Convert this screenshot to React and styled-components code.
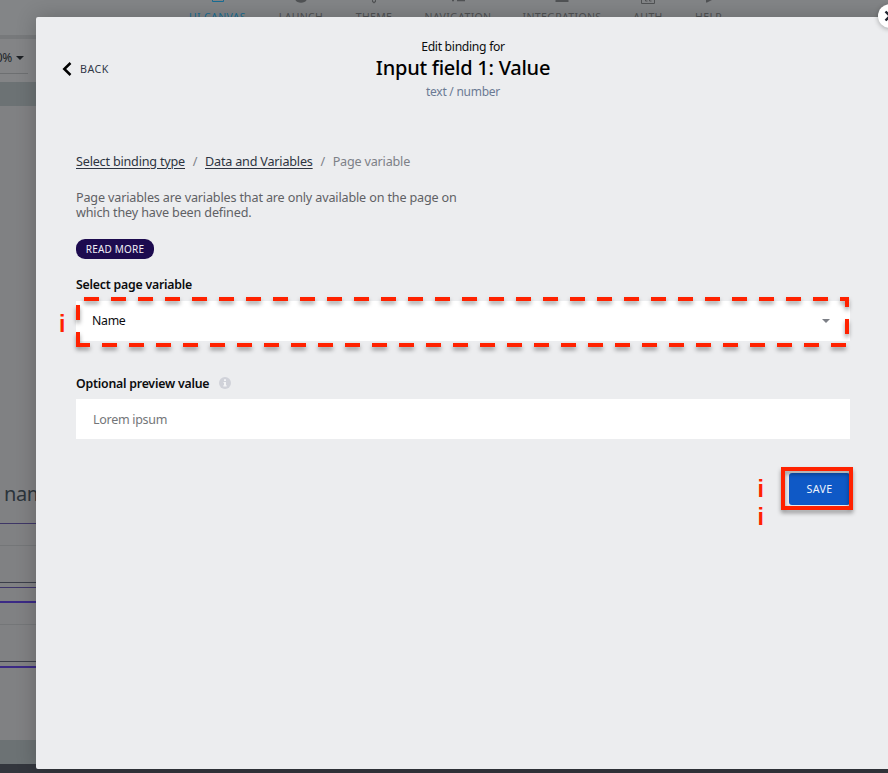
import React from "react";
import styled, { createGlobalStyle } from "styled-components";

const Global = createGlobalStyle`
  * { box-sizing: border-box; }
  body { margin: 0; overflow: hidden; font-family: "Noto Sans", "Open Sans", sans-serif; }
  button, input { font-family: inherit; }
`;

const Screen = styled.div`
  position: relative;
  width: 888px;
  height: 773px;
  overflow: hidden;
`;

/* Dimmed editor behind the dialog */
const Backdrop = styled.div`
  display: flex;
  flex-direction: column;
  height: 100%;
  background: #808183;
`;
const TopBar = styled.nav`
  display: flex;
  align-items: flex-start;
  height: 39px;
  padding-left: 189px;
  background: #838587;
  border-bottom: 4px solid #77797b;
  flex: none;
`;
const NavItem = styled.div`
  display: flex;
  flex-direction: column;
  align-items: center;
  flex: none;
  width: ${(p) => p.$width}px;
  margin-right: ${(p) => p.$gap}px;
  color: ${(p) => (p.$active ? "#176d94" : "#505254")};
  font-size: 10.5px;
  line-height: 15px;
  letter-spacing: 0.35px;
  white-space: nowrap;
  svg { display: block; height: 9px; width: 20px; margin-bottom: 1px; flex: none; }
`;
const Toolbar = styled.div`
  display: flex;
  align-items: flex-start;
  flex: none;
  height: 43px;
  width: 100%;
  background: #838486;
`;
const Zoom = styled.div`
  display: flex;
  align-items: center;
  justify-content: flex-end;
  gap: 4px;
  width: 28px;
  height: 35px;
  padding: 3px 4px 0 0;
  border-bottom: 1px solid #6d6f71;
  color: #202429;
  font-size: 12px;
  white-space: nowrap;
  letter-spacing: -0.3px;
  svg { flex: none; }
`;
const Band = styled.div`
  flex: none;
  height: 24px;
  background: #6c7274;
`;
const Canvas = styled.div`
  flex: none;
  display: flex;
  flex-direction: column;
  height: 634px;
`;
const FieldName = styled.div`
  height: 417px;
  padding: 371px 0 0 4px;
  color: #2c343b;
  font-size: 20px;
  line-height: 34px;
  letter-spacing: -0.4px;
`;
const Rule = styled.div`
  flex: none;
  height: ${(p) => p.$weight}px;
  margin-bottom: ${(p) => p.$after}px;
  background: ${(p) => p.$color};
`;
const Footer = styled.div`
  flex: 1;
  background: #33363d;
`;

/* Dialog */
const Dialog = styled.section`
  position: absolute;
  left: 36px;
  top: 17px;
  width: 854px;
  height: 752px;
  padding: 21px 40px 0;
  display: flex;
  flex-direction: column;
  background: #ecedef;
  border-radius: 2px;
  box-shadow: 0 0 20px rgba(0, 0, 0, 0.22);
`;
const Header = styled.header`
  display: grid;
  grid-template-columns: 1fr auto 1fr;
  height: 64px;
`;
const Back = styled.button`
  display: flex;
  align-items: center;
  align-self: start;
  gap: 8px;
  height: 20px;
  margin: 21px 0 0 -14px;
  padding: 0;
  border: 0;
  background: none;
  color: #323847;
  font-size: 10.7px;
  letter-spacing: 0.5px;
`;
const Heading = styled.div`
  display: flex;
  flex-direction: column;
  align-items: center;
  white-space: nowrap;
`;
const Overline = styled.div`
  color: #0c0d0e;
  font-size: 12.2px;
  line-height: 18px;
  letter-spacing: -0.31px;
`;
const Title = styled.h1`
  margin: 0;
  color: #000;
  font-size: 20px;
  font-weight: 500;
  line-height: 23px;
  letter-spacing: -0.25px;
`;
const Subtitle = styled.div`
  margin-top: 2px;
  color: #6b7a94;
  font-size: 12px;
  line-height: 22px;
  letter-spacing: -0.26px;
`;
const Crumbs = styled.nav`
  display: flex;
  align-items: center;
  height: 20px;
  margin-top: 49px;
  color: #7c8087;
  font-size: 12.6px;
  letter-spacing: -0.19px;
  white-space: nowrap;
`;
const CrumbLink = styled.a`
  color: #2d3441;
  text-decoration: underline;
  text-decoration-thickness: 1px;
  text-underline-offset: 2px;
`;
const Slash = styled.span`
  width: 20px;
  text-align: center;
`;
const Description = styled.p`
  width: 400px;
  margin: 19px 0 0;
  color: #5f6165;
  font-size: 12.6px;
  line-height: 15px;
  letter-spacing: -0.155px;
`;
const ReadMore = styled.button`
  flex: none;
  align-self: flex-start;
  width: 78px;
  height: 20px;
  margin-top: 19px;
  padding: 0;
  border: 0;
  border-radius: 9px;
  background: #1d0b4f;
  color: #f1eff6;
  font-size: 10px;
  line-height: 19px;
  letter-spacing: 0.2px;
`;
const Label = styled.label`
  display: flex;
  align-items: center;
  gap: 10px;
  height: 20px;
  margin-top: ${(p) => p.$top}px;
  color: #0b0c0e;
  font-size: 12.3px;
  font-weight: 600;
  letter-spacing: -0.21px;
`;
const SelectWrap = styled.div`
  position: relative;
  margin-top: 7px;
`;
const Select = styled.div`
  display: flex;
  align-items: center;
  justify-content: space-between;
  height: 40px;
  padding: 0 20px 0 16px;
  background: #fff;
  color: #0b0c0e;
  font-size: 12.3px;
  letter-spacing: -0.3px;
`;
const Value = styled.span`
  padding-bottom: 2px;
`;
const Input = styled.input`
  flex: none;
  height: 40px;
  margin-top: 6px;
  padding: 0 17px;
  border: 0;
  border-radius: 0;
  outline: 0;
  background: #fff;
  font-size: 12.5px;
  letter-spacing: -0.3px;
  &::placeholder { color: #737578; opacity: 1; }
`;
const Actions = styled.div`
  position: relative;
  display: flex;
  justify-content: flex-end;
  margin-top: 34px;
`;
const Save = styled.button`
  width: 61px;
  height: 32px;
  padding: 0;
  border: 0;
  border-radius: 3px;
  background: #0f59c6;
  color: #eef4fd;
  font-size: 10.7px;
  letter-spacing: 0.4px;
`;
const Close = styled.button`
  position: absolute;
  left: 842px;
  top: -13px;
  width: 24px;
  height: 24px;
  display: flex;
  align-items: center;
  justify-content: center;
  padding: 0;
  border: 0;
  border-radius: 50%;
  background: #fff;
  box-shadow: 0 1px 5px rgba(0, 0, 0, 0.3);
`;

/* Red annotations laid over the form */
const DashFrame = styled.svg`
  position: absolute;
  left: -4px;
  top: -8px;
  overflow: visible;
  filter: drop-shadow(0 3px 2px rgba(0, 0, 0, 0.38));
`;
const SaveFrame = styled.div`
  position: absolute;
  right: -3px;
  top: -6px;
  width: 72px;
  height: 43px;
  border: 4px solid #ff2200;
  filter: drop-shadow(0 3px 2px rgba(0, 0, 0, 0.38));
`;
const Marker = styled.span`
  position: absolute;
  left: ${(p) => p.$x}px;
  top: ${(p) => p.$y}px;
  color: #ff2200;
  font-family: "Liberation Sans", Arial, sans-serif;
  font-size: 23px;
  font-weight: 700;
  line-height: 28px;
`;

const NavGlyph = ({ kind }) => (
  <svg viewBox="0 0 20 9" fill="none" stroke="currentColor">
    {kind === "canvas" && <path d="M4.5-2V1.500h11V-2" />}
    {kind === "launch" && <path d="M4-1h12C15 4 5 4 4-1z" fill="currentColor" stroke="none" />}
    {kind === "theme" && <path d="M8.500-1v3q1.500 2 3 0V-1M10 1v2" />}
    {kind === "navigation" && <path d="M4 .5h2M9 .5h8" strokeWidth="1.300" />}
    {kind === "integrations" && <path d="M3.500-1h13v3h-13z" fill="currentColor" stroke="none" />}
    {kind === "auth" && <path d="M3.500-2v5.500h13V-2M7.500-1v2h2M11.500-1v2h2" />}
    {kind === "help" && <path d="M7 2.500V0h6L8 2.500z" fill="currentColor" stroke="none" />}
  </svg>
);

const NAV = [
  ["canvas", "UI CANVAS", 57, 33],
  ["launch", "LAUNCH", 44, 33],
  ["theme", "THEME", 36, 33],
  ["navigation", "NAVIGATION", 66, 31],
  ["integrations", "INTEGRATIONS", 80, 32],
  ["auth", "AUTH", 28, 33],
  ["help", "HELP", 27, 0],
];

const RULES = [
  [1, 21, "#3e3666"],
  [1, 36, "#747678"],
  [1, 4, "#3b3e49"],
  [1, 13, "#3e3569"],
  [2, 21, "#3b2a85"],
  [1, 36, "#747678"],
  [1, 4, "#3b3e49"],
  [2, 0, "#3b2a85"],
];

export default function App() {
  return (
    <Screen>
      <Global />
      <Backdrop>
        <TopBar>
          {NAV.map(([kind, name, width, gap]) => (
            <NavItem key={kind} $width={width} $gap={gap} $active={kind === "canvas"}>
              <NavGlyph kind={kind} />
              {name}
            </NavItem>
          ))}
        </TopBar>
        <Toolbar>
          <Zoom>
            100%
            <svg width="8" height="4" viewBox="0 0 8 4"><path d="M0 0h8L4 4z" fill="#1d2024" /></svg>
          </Zoom>
        </Toolbar>
        <Band />
        <Canvas>
          <FieldName>name</FieldName>
          {RULES.map(([weight, after, color], i) => (
            <Rule key={i} $weight={weight} $after={after} $color={color} />
          ))}
        </Canvas>
        <Band />
        <Footer />
      </Backdrop>

      <Dialog>
        <Header>
          <Back>
            <svg width="10" height="14" viewBox="0 0 10 14" fill="none">
              <path d="M8.500 1L2.300 7l6.200 6" stroke="#000" strokeWidth="2.500" />
            </svg>
            BACK
          </Back>
          <Heading>
            <Overline>Edit binding for</Overline>
            <Title>Input field 1: Value</Title>
            <Subtitle>text / number</Subtitle>
          </Heading>
        </Header>

        <Crumbs>
          <CrumbLink>Select binding type</CrumbLink>
          <Slash>/</Slash>
          <CrumbLink>Data and Variables</CrumbLink>
          <Slash>/</Slash>
          <span>Page variable</span>
        </Crumbs>
        <Description>
          Page variables are variables that are only available on the page on
          which they have been defined.
        </Description>
        <ReadMore>READ MORE</ReadMore>

        <Label $top={15}>Select page variable</Label>
        <SelectWrap>
          <Select>
            <Value>Name</Value>
            <svg width="8" height="4" viewBox="0 0 8 4"><path d="M0 0h8L4 4z" fill="#7c7f86" /></svg>
          </Select>
          <DashFrame width="780" height="60" fill="none">
            <path
              d="M6 54V6H775V52H4"
              stroke="#ff2200"
              strokeWidth="4"
              strokeDasharray="15 12"
            />
          </DashFrame>
          <Marker $x={-17} $y={9}>i</Marker>
        </SelectWrap>

        <Label $top={32}>
          Optional preview value
          <svg width="12" height="12" viewBox="0 0 12 12">
            <circle cx="6" cy="6" r="6" fill="#d0d2d9" />
            <path d="M5 2.200h2v1.700H5zM4.500 5H7v3.200h.7v1.200H4.300V8.200H5V6h-.5z" fill="#f3f4f6" />
          </svg>
        </Label>
        <Input placeholder="Lorem ipsum" />

        <Actions>
          <Save>SAVE</Save>
          <SaveFrame />
          <Marker $x={681.5} $y={2}>i</Marker>
          <Marker $x={681.5} $y={30}>i</Marker>
        </Actions>

        <Close>
          <svg width="12" height="12" viewBox="0 0 12 12">
            <path d="M1.500 1.500l9 9M10.500 1.500l-9 9" stroke="#20242f" strokeWidth="2.400" />
          </svg>
        </Close>
      </Dialog>
    </Screen>
  );
}
